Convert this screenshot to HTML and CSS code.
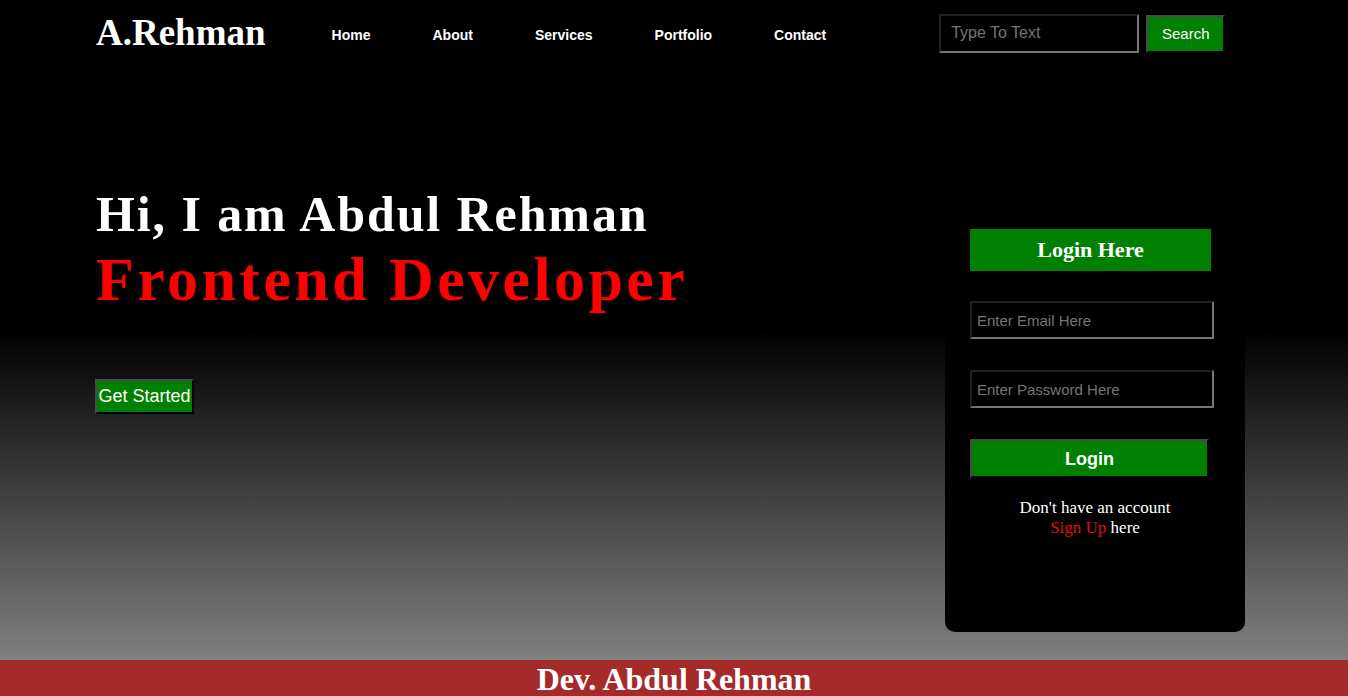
FILE: index.html
```html
<!DOCTYPE html>
<html>
<head>
<meta charset="utf-8">
<title>A.Rehman</title>
<link rel="stylesheet" href="styles.css">
</head>
<body>
<div class="page">
  <header class="nav">
    <h2 class="logo">A.Rehman</h2>
    <ul class="menu">
      <li><a href="#">Home</a></li>
      <li><a href="#">About</a></li>
      <li><a href="#">Services</a></li>
      <li><a href="#">Portfolio</a></li>
      <li><a href="#">Contact</a></li>
    </ul>
    <div class="search">
      <input class="search-input" type="text" placeholder="Type To Text">
      <button class="search-btn">Search</button>
    </div>
  </header>
  <main class="main">
    <section class="intro">
      <h1 class="hi">Hi, I am Abdul Rehman</h1>
      <h1 class="role">Frontend Developer</h1>
      <button class="cta">Get Started</button>
    </section>
    <aside class="card">
      <h2 class="card-title">Login Here</h2>
      <input class="field" type="email" placeholder="Enter Email Here">
      <input class="field" type="password" placeholder="Enter Password Here">
      <button class="login-btn">Login</button>
      <p class="signup">Don't have an account<br><a href="#">Sign Up</a> here</p>
    </aside>
  </main>
</div>
<footer class="footer">Dev. Abdul Rehman</footer>
</body>
</html>
```
FILE: styles.css
```css
* { box-sizing: border-box; }
html, body { margin: 0; padding: 0; }
body { background: #000; font-family: "Liberation Serif", "Times New Roman", serif; overflow: hidden; }

.page {
  height: 660px;
  background: linear-gradient(to bottom, #000 50%, #808080 100%);
}

.nav {
  display: flex;
  align-items: center;
  height: 66px;
  padding-left: 96px;
}
.logo {
  margin: 0;
  color: #fff;
  font-size: 37px;
  font-weight: bold;
  line-height: 1;
  margin-top: -2px;
}
.menu {
  display: flex;
  list-style: none;
  margin: 3px 0 0 66px;
  padding: 0;
  gap: 62px;
}
.menu a {
  color: #fff;
  text-decoration: none;
  font-family: "Liberation Sans", Arial, sans-serif;
  font-weight: bold;
  font-size: 14px;
}
.search {
  display: flex;
  margin-left: 113px;
  gap: 7px;
  margin-top: 0;
}
.search-input {
  width: 200px;
  height: 39px;
  background: #000;
  border: 2px inset #767676;
  color: #fff;
  font-family: "Liberation Sans", Arial, sans-serif;
  font-size: 16px;
  padding: 0 10px;
}
.search-input::placeholder { color: #757575; }
.search-btn {
  width: 79px;
  height: 38px;
  margin-top: 1px;
  background: green;
  color: #fff;
  border: 2px outset #4a4a4a;
  font-family: "Liberation Sans", Arial, sans-serif;
  font-size: 15px;
}

.main {
  display: flex;
  justify-content: space-between;
  padding-left: 95px;
  padding-right: 103px;
}
.intro { padding-top: 119px; }
.hi {
  margin: 0 0 0 1px;
  color: #fff;
  font-size: 50px;
  letter-spacing: 1.9px;
  line-height: 58px;
}
.role {
  margin: 0 0 0 1px;
  color: #f00;
  font-size: 62px;
  letter-spacing: 3.4px;
  line-height: 72px;
}
.cta {
  margin-top: 64px;
  width: 99px;
  height: 35px;
  padding: 0;
  background: green;
  color: #fff;
  border: 2px outset #4a4a4a;
  font-family: "Liberation Sans", Arial, sans-serif;
  font-size: 18px;
}

.card {
  margin-top: 134px;
  width: 300px;
  height: 432px;
  background: #000;
  border-radius: 10px;
  padding: 29px 0 0 25px;
  display: flex;
  flex-direction: column;
  align-items: flex-start;
}
.card-title {
  margin: 0;
  width: 241px;
  height: 42px;
  background: green;
  color: #fff;
  font-size: 22px;
  text-align: center;
  line-height: 42px;
}
.field {
  margin-top: 30px;
  width: 244px;
  height: 38px;
  background: #000;
  border: 2px inset #767676;
  color: #fff;
  font-family: "Liberation Sans", Arial, sans-serif;
  font-size: 15px;
  padding: 0 5px;
}
.field + .field { margin-top: 31px; }
.field::placeholder { color: #757575; }
.login-btn {
  margin-top: 31px;
  width: 239px;
  height: 39px;
  padding-top: 3px;
  background: green;
  color: #fff;
  border: 2px outset #4a4a4a;
  font-family: "Liberation Sans", Arial, sans-serif;
  font-weight: bold;
  font-size: 18px;
}
.signup {
  margin: 20px 0 0;
  width: 250px;
  color: #fff;
  font-size: 17px;
  line-height: 20px;
  text-align: center;
}
.signup a { color: #e01010; text-decoration: none; }

.footer {
  height: 36px;
  background: #a52a2a;
  color: #fff;
  font-weight: bold;
  font-size: 32px;
  text-align: center;
  line-height: 38px;
}
```
